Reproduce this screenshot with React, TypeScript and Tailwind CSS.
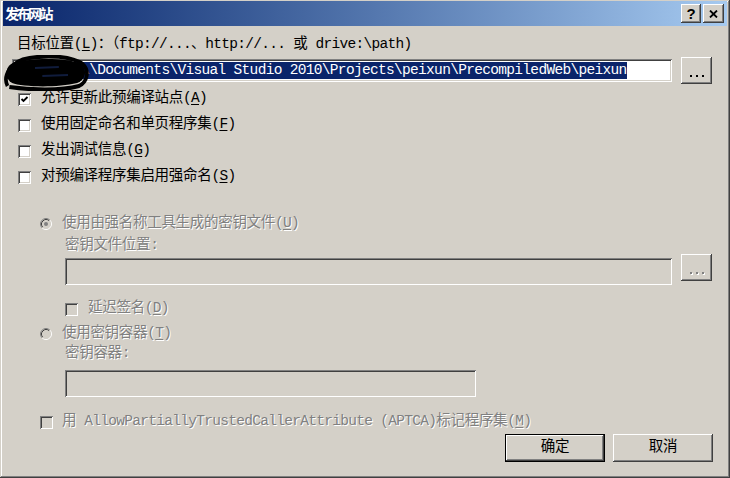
import React from "react";

const raised =
  "bg-[#d4d0c8] shadow-[inset_-1px_-1px_#404040,inset_1px_1px_#ffffff,inset_-2px_-2px_#808080,inset_2px_2px_#d4d0c8]";
const sunken =
  "shadow-[inset_1px_1px_#808080,inset_-1px_-1px_#ffffff,inset_2px_2px_#404040,inset_-2px_-2px_#d4d0c8]";
const dim = "text-[#808080] [text-shadow:1px_1px_0_#ffffff]";

// latin runs: SimSun half-width is ~8px, tighter than the CJK glyph spacing
function A({ children }: { children: React.ReactNode }) {
  return <span className="tracking-[-0.7px]">{children}</span>;
}

function Key({ k }: { k: string }) {
  return (
    <A>
      (<span className="underline underline-offset-2">{k}</span>)
    </A>
  );
}

function CheckBox({ checked, disabled }: { checked?: boolean; disabled?: boolean }) {
  return (
    <div
      className={`w-[13px] h-[13px] shrink-0 flex items-center justify-center ${sunken} ${
        disabled ? "bg-[#d4d0c8]" : "bg-white"
      }`}
    >
      {checked && (
        <svg width="9" height="9" viewBox="0 0 9 9">
          <path d="M1.5 4 L3.5 6 L7.5 2" stroke="#000" strokeWidth="1.8" fill="none" />
        </svg>
      )}
    </div>
  );
}

function Radio({ checked }: { checked?: boolean }) {
  return (
    <svg width="12" height="12" viewBox="0 0 12 12" className="shrink-0">
      <circle cx="6" cy="6" r="5" fill="#d4d0c8" />
      <path d="M2.11 9.89 A5.5 5.5 0 0 1 9.89 2.11" stroke="#808080" fill="none" />
      <path d="M9.89 2.11 A5.5 5.5 0 0 1 2.11 9.89" stroke="#ffffff" fill="none" />
      <path d="M2.82 9.18 A4.5 4.5 0 0 1 9.18 2.82" stroke="#404040" fill="none" />
      <path d="M9.18 2.82 A4.5 4.5 0 0 1 2.82 9.18" stroke="#d4d0c8" fill="none" />
      {checked && <circle cx="6" cy="6" r="2" fill="#808080" />}
    </svg>
  );
}

function Dots({ disabled }: { disabled?: boolean }) {
  return (
    <div className={`w-[31px] h-[27px] shrink-0 flex items-end justify-center pb-[7px] ${raised}`}>
      <div className="flex gap-[4px]">
        {[0, 1, 2].map((i) => (
          <div
            key={i}
            className={`w-[2px] h-[2px] ${disabled ? "bg-[#808080] shadow-[1px_1px_0_#ffffff]" : "bg-black"}`}
          />
        ))}
      </div>
    </div>
  );
}

export default function App() {
  return (
    <div className="w-[730px] h-[478px] relative overflow-hidden bg-[#d4d0c8] shadow-[inset_-1px_-1px_#404040,inset_1px_1px_#d4d0c8,inset_-2px_-2px_#808080,inset_2px_2px_#ffffff] font-['Liberation_Mono','Noto_Sans_CJK_SC',monospace] text-[14.5px] tracking-[-0.3px] text-black">
      {/* title bar */}
      <div className="mx-[3px] mt-[1px] h-[25px] flex items-center bg-gradient-to-r from-[#0a246a] to-[#a6caf0]">
        <span className="pl-[2px] text-white font-bold text-[14px] tracking-[-2.5px] font-['Noto_Sans_CJK_SC',sans-serif]">
          发布网站
        </span>
        <div className="ml-auto mr-[3px] flex gap-[2px]">
          <div className={`w-[20px] h-[19px] flex items-center justify-center ${raised}`}>
            <span className="font-bold text-[15px] leading-none font-['Liberation_Sans',sans-serif] tracking-normal">
              ?
            </span>
          </div>
          <div className={`w-[21px] h-[19px] flex items-center justify-center ${raised}`}>
            <svg width="9" height="8" viewBox="0 0 9 8">
              <path d="M1 0.5 L8 7.5 M8 0.5 L1 7.5" stroke="#000" strokeWidth="1.8" />
            </svg>
          </div>
        </div>
      </div>

      {/* target location */}
      <div className="mt-[9px] h-[18px] leading-[18px] pl-[17px] whitespace-nowrap">
        目标位置<Key k="L" />：（<A>ftp://...</A>、<A>http://... </A>或<A> drive:\path)</A>
      </div>
      <div className="mt-[4px] h-[27px] flex items-center">
        <div className={`ml-[12px] w-[660px] h-[23px] bg-white flex items-center pl-[3px] ${sunken}`}>
          <span className="bg-[#0a246a] text-white h-[17px] leading-[17px] whitespace-nowrap tracking-[-0.68px] pl-[2px]">
            C:\Users\\Documents\Visual Studio 2010\Projects\peixun\PrecompiledWeb\peixun
          </span>
        </div>
        <div className="ml-[9px]">
          <Dots />
        </div>
      </div>

      {/* options */}
      <div className="mt-[2px] flex flex-col">
        {[
          { t: "允许更新此预编译站点", k: "A", c: true },
          { t: "使用固定命名和单页程序集", k: "F" },
          { t: "发出调试信息", k: "G" },
          { t: "对预编译程序集启用强命名", k: "S" },
        ].map((o) => (
          <div key={o.k} className="h-[26px] flex items-center pl-[18px] gap-[10px]">
            <CheckBox checked={o.c} />
            <span className="whitespace-nowrap">
              {o.t}
              <Key k={o.k} />
            </span>
          </div>
        ))}
      </div>

      {/* strong name group (disabled) */}
      <div className={`mt-[24px] h-[20px] flex items-center pl-[40px] gap-[10px] ${dim}`}>
        <Radio checked />
        <span className="whitespace-nowrap">
          使用由强名称工具生成的密钥文件<Key k="U" />
        </span>
      </div>
      <div className={`mt-[2px] h-[18px] leading-[18px] pl-[65px] ${dim}`}>密钥文件位置:</div>
      <div className="h-[31px] flex items-start">
        <div className={`ml-[65px] mt-[4px] w-[607px] h-[27px] bg-[#d4d0c8] ${sunken}`} />
        <div className="ml-[9px]">
          <Dots disabled />
        </div>
      </div>
      <div className={`mt-[14px] h-[20px] flex items-center pl-[65px] gap-[10px] ${dim}`}>
        <CheckBox disabled />
        <span className="whitespace-nowrap">
          延迟签名<Key k="D" />
        </span>
      </div>
      <div className={`mt-[5px] h-[20px] flex items-center pl-[40px] gap-[10px] ${dim}`}>
        <Radio />
        <span className="whitespace-nowrap">
          使用密钥容器<Key k="T" />
        </span>
      </div>
      <div className={`h-[18px] leading-[18px] pl-[65px] ${dim}`}>密钥容器:</div>
      <div className={`mt-[8px] ml-[65px] w-[411px] h-[27px] bg-[#d4d0c8] ${sunken}`} />
      <div className={`mt-[15px] h-[20px] flex items-center pl-[40px] gap-[9px] ${dim}`}>
        <CheckBox disabled />
        <span className="whitespace-nowrap">
          用<A> AllowPartiallyTrustedCallerAttribute (APTCA)</A>标记程序集<Key k="M" />
        </span>
      </div>

      {/* buttons */}
      <div className="mt-[2px] flex justify-end gap-[8px] pr-[17px]">
        <div className="w-[100px] h-[28px] border border-black">
          <div className={`w-full h-full flex items-center justify-center ${raised}`}>确定</div>
        </div>
        <div className={`w-[100px] h-[28px] flex items-center justify-center ${raised}`}>取消</div>
      </div>

      {/* redaction scribble over the start of the path */}
      <svg
        className="absolute left-[2px] top-[55px]"
        width="88"
        height="36"
        viewBox="0 0 96 36"
        preserveAspectRatio="none"
      >
        <path
          d="M10 9 C 26 3, 66 2, 84 8 C 94 13, 92 25, 82 28 C 60 33, 22 32, 11 28 C 3 24, 3 13, 10 9 Z"
          fill="#000"
        />
        <path
          d="M6 31 C 1 22, 8 6, 30 3 C 50 0, 76 1, 88 9 C 96 16, 93 27, 84 31 C 64 36, 30 35, 8 32"
          stroke="#000"
          strokeWidth="4"
          fill="none"
        />
        <path d="M36 13 L 62 12 M44 21 L 72 20" stroke="#101c3c" strokeWidth="2" />
      </svg>
    </div>
  );
}
